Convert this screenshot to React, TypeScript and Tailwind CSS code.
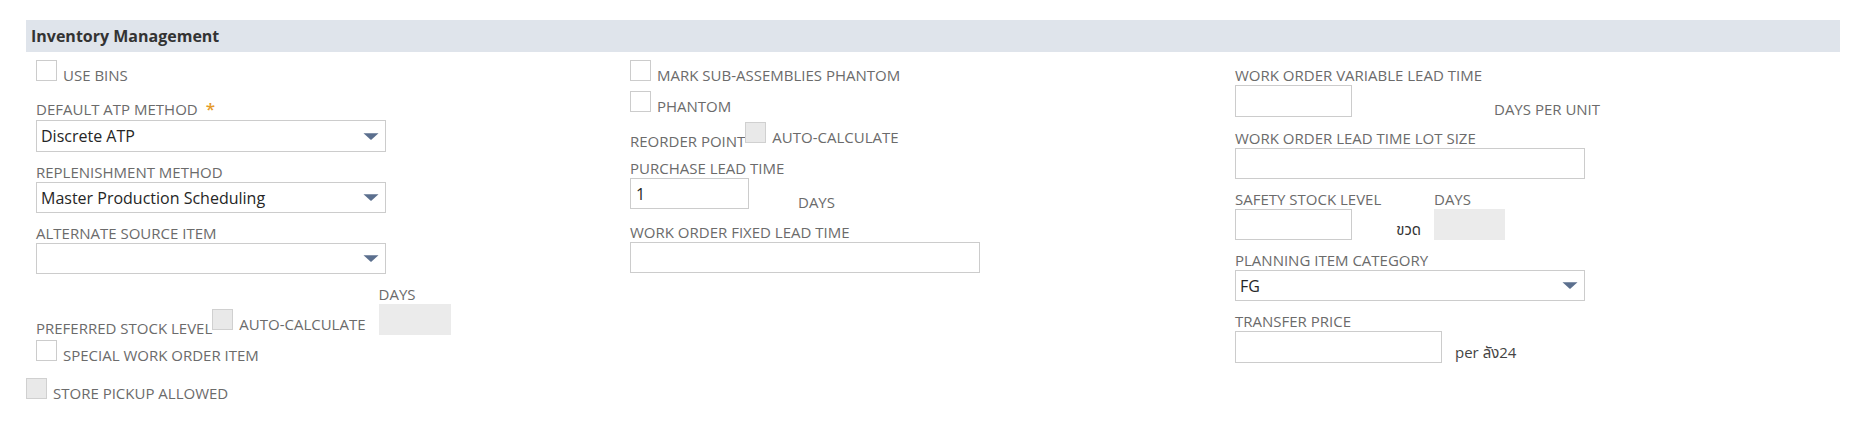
import React from "react";

const LABEL = "text-[15px] leading-[18px] text-[#6b6b6b] whitespace-nowrap";

function Cb({ gray = false }: { gray?: boolean }) {
  return (
    <div
      className={
        gray
          ? "w-[21px] h-[21px] shrink-0 border border-[#d0d0d0] bg-[#e9e9e9]"
          : "w-[21px] h-[21px] shrink-0 border border-[#cccccc] bg-white"
      }
    />
  );
}

function CheckRow({ label, gray = false }: { label: string; gray?: boolean }) {
  return (
    <div className="flex items-start h-[21px]">
      <Cb gray={gray} />
      <span className={"ml-[6px] mt-[6px] " + LABEL}>{label}</span>
    </div>
  );
}

function Label({ children }: { children: React.ReactNode }) {
  return <div className={LABEL}>{children}</div>;
}

function Arrow() {
  return (
    <svg width="16" height="7" viewBox="0 0 16 7" className="shrink-0">
      <path d="M0.5 0.3 H15.5 L8.6 6.6 Q8 7.1 7.4 6.6 Z" fill="#5b6f8e" />
    </svg>
  );
}

function Select({ value, h = "h-[31px]" }: { value?: string; h?: string }) {
  return (
    <div
      className={
        "w-[350px] " +
        h +
        " border border-[#cccccc] bg-white flex items-center justify-between pl-[4px] pr-[6px] text-[16px] text-[#262626]"
      }
    >
      <span>{value ?? ""}</span>
      <Arrow />
    </div>
  );
}

export default function App() {
  return (
    <div className="w-full min-h-[430px] bg-white pt-[20px] pl-[26px] pr-[21px] font-['Open_Sans','Noto_Sans','Noto_Sans_Thai','Tahoma',sans-serif]">
      {/* Section header */}
      <div className="h-[32px] bg-[#dfe4eb] flex items-center pl-[5px]">
        <span className="text-[16px] font-bold text-[#333333]">Inventory Management</span>
      </div>

      <div className="grid grid-cols-[604px_605px_605px]">
        {/* Left column */}
        <div className="pl-[10px]">
          <div className="mt-[8px]">
            <CheckRow label="USE BINS" />
          </div>
          <div className="mt-[19px] flex items-start">
            <Label>DEFAULT ATP METHOD</Label>
            <span className="ml-[8px] text-[17px] leading-[18px] font-semibold text-[#e59b2b]">*</span>
          </div>
          <div className="mt-[2px]">
            <Select value="Discrete ATP" h="h-[32px]" />
          </div>
          <div className="mt-[11px]">
            <Label>REPLENISHMENT METHOD</Label>
          </div>
          <div className="mt-[1px]">
            <Select value="Master Production Scheduling" />
          </div>
          <div className="mt-[11px]">
            <Label>ALTERNATE SOURCE ITEM</Label>
          </div>
          <div className="mt-[1px]">
            <Select />
          </div>
          <div className="flex items-start h-[61px]">
            <span className={"mt-[45px] " + LABEL}>PREFERRED STOCK LEVEL</span>
            <div className="mt-[35px] flex items-start">
              <Cb gray />
              <span className={"ml-[6px] mt-[6px] " + LABEL}>AUTO-CALCULATE</span>
            </div>
            <div className="ml-[13px] mt-[11px]">
              <Label>DAYS</Label>
              <div className="mt-[1px] w-[72px] h-[31px] bg-[#ebebeb]" />
            </div>
          </div>
          <div className="mt-[5px]">
            <CheckRow label="SPECIAL WORK ORDER ITEM" />
          </div>
        </div>

        {/* Middle column */}
        <div>
          <div className="mt-[8px]">
            <CheckRow label="MARK SUB-ASSEMBLIES PHANTOM" />
          </div>
          <div className="mt-[10px]">
            <CheckRow label="PHANTOM" />
          </div>
          <div className="flex items-start h-[38px]">
            <span className={"mt-[20px] " + LABEL}>REORDER POINT</span>
            <div className="mt-[10px] flex items-start">
              <Cb gray />
              <span className={"ml-[6px] mt-[6px] " + LABEL}>AUTO-CALCULATE</span>
            </div>
          </div>
          <div className="mt-[9px]">
            <Label>PURCHASE LEAD TIME</Label>
          </div>
          <div className="mt-[1px] flex items-start">
            <div className="w-[119px] h-[31px] border border-[#cccccc] bg-white flex items-center pl-[5px] text-[16px] text-[#262626]">
              1
            </div>
            <span className={"ml-[49px] mt-[15px] " + LABEL}>DAYS</span>
          </div>
          <div className="mt-[12px]">
            <Label>WORK ORDER FIXED LEAD TIME</Label>
          </div>
          <div className="mt-[1px] w-[350px] h-[31px] border border-[#cccccc] bg-white" />
        </div>

        {/* Right column */}
        <div>
          <div className="mt-[14px]">
            <Label>WORK ORDER VARIABLE LEAD TIME</Label>
          </div>
          <div className="mt-[1px] flex items-start">
            <div className="w-[117px] h-[32px] border border-[#cccccc] bg-white" />
            <span className={"ml-[142px] mt-[15px] " + LABEL}>DAYS PER UNIT</span>
          </div>
          <div className="mt-[11px]">
            <Label>WORK ORDER LEAD TIME LOT SIZE</Label>
          </div>
          <div className="mt-[1px] w-[350px] h-[31px] border border-[#cccccc] bg-white" />
          <div className="mt-[11px] flex">
            <div className="w-[199px]">
              <Label>SAFETY STOCK LEVEL</Label>
            </div>
            <Label>DAYS</Label>
          </div>
          <div className="mt-[1px] flex items-start">
            <div className="w-[199px] flex items-start justify-between pr-[13px]">
              <div className="w-[117px] h-[31px] border border-[#cccccc] bg-white" />
              <span className="mt-[11px] text-[15px] leading-[18px] text-[#333333] whitespace-nowrap">ขวด</span>
            </div>
            <div className="w-[71px] h-[31px] bg-[#ebebeb]" />
          </div>
          <div className="mt-[11px]">
            <Label>PLANNING ITEM CATEGORY</Label>
          </div>
          <div className="mt-[1px]">
            <Select value="FG" />
          </div>
          <div className="mt-[11px]">
            <Label>TRANSFER PRICE</Label>
          </div>
          <div className="mt-[1px] flex items-start">
            <div className="w-[207px] h-[32px] border border-[#cccccc] bg-white" />
            <span className="ml-[13px] mt-[12px] text-[15px] leading-[18px] text-[#444444] whitespace-nowrap">
              per ลัง24
            </span>
          </div>
        </div>
      </div>

      <div className="mt-[15px]">
        <CheckRow label="STORE PICKUP ALLOWED" gray />
      </div>
    </div>
  );
}
